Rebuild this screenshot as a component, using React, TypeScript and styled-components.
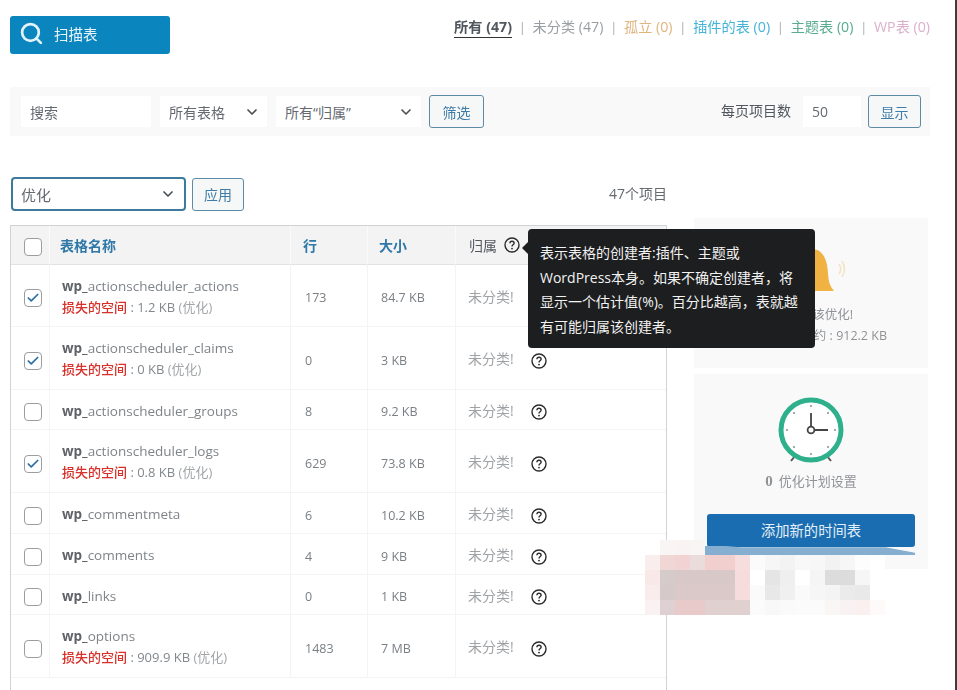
import React from "react";
import styled, { createGlobalStyle } from "styled-components";
import { Search, ChevronDown, Check } from "lucide-react";

const GlobalStyle = createGlobalStyle`
  html, body {
    margin: 0;
    padding: 0;
    background: #fff;
  }
  body {
    width: 957px;
    height: 690px;
    overflow: hidden;
    font-family: "Open Sans", "Noto Sans CJK SC", sans-serif;
    color: #50575e;
  }
`;

const Page = styled.div`
  position: relative;
  width: 957px;
  height: 690px;
  box-sizing: border-box;
  padding: 16px 25px 0 10px;
  border-right: 2px solid #3c3c3c;
  overflow: hidden;
  filter: blur(0.35px);
`;

const TopRow = styled.div`
  display: flex;
  justify-content: space-between;
  align-items: flex-start;
  height: 38px;
`;

const ScanButton = styled.button`
  display: flex;
  align-items: center;
  gap: 10px;
  width: 160px;
  height: 38px;
  padding: 0 0 3px 9px;
  border: 0;
  border-radius: 3px;
  background: #0a85bd;
  color: #e8f4fa;
  font: 14.5px "Noto Sans CJK SC", sans-serif;
`;

const Views = styled.div`
  display: flex;
  align-items: center;
  gap: 7px;
  margin-top: 2px;
  font-size: 14.2px;
  line-height: 18px;
`;

const ViewLink = styled.span<{ $color: string; $active?: boolean }>`
  color: ${(p) => p.$color};
  font-weight: ${(p) => (p.$active ? 700 : 400)};
  padding-bottom: 1px;
  border-bottom: 1px solid ${(p) => (p.$active ? "#333" : "transparent")};
`;

const Sep = styled.span`
  color: #a0a5aa;
  font-size: 12px;
`;

const FilterBar = styled.div`
  display: flex;
  align-items: center;
  height: 49px;
  margin-top: 33px;
  padding: 0 9px 0 11px;
  background: #f9f9f9;
`;

const Field = styled.div<{ $w: number; $ml?: number }>`
  display: flex;
  align-items: center;
  justify-content: space-between;
  box-sizing: border-box;
  width: ${(p) => p.$w}px;
  height: 31px;
  margin-left: ${(p) => p.$ml ?? 0}px;
  padding: 0 7px 0 9px;
  background: #fff;
  color: #646970;
  font-size: 14px;
`;

const OutlineButton = styled.button<{ $w: number; $h: number; $ml: number }>`
  width: ${(p) => p.$w}px;
  height: ${(p) => p.$h}px;
  margin-left: ${(p) => p.$ml}px;
  padding: 0;
  border: 1px solid #5d8ba5;
  border-radius: 3px;
  background: #f6f7f7;
  color: #3f7da8;
  font: 14px "Noto Sans CJK SC", sans-serif;
`;

const PerPage = styled.span`
  margin-left: auto;
  margin-right: 12px;
  color: #50575e;
  font-size: 14px;
  position: relative;
  top: -2px;
`;

const BulkRow = styled.div`
  display: flex;
  align-items: center;
  height: 34px;
  margin-top: 41px;
  margin-left: 1px;
  width: 656px;
`;

const BulkSelect = styled.div`
  display: flex;
  align-items: center;
  justify-content: space-between;
  box-sizing: border-box;
  width: 175px;
  height: 34px;
  padding: 0 8px 0 8px;
  border: 2px solid #3d7a9c;
  border-radius: 4px;
  color: #646970;
  font-size: 15px;
`;

const Count = styled.span`
  margin-left: auto;
  margin-top: -3px;
  color: #646970;
  font-size: 14px;
`;

const Content = styled.div`
  display: flex;
  align-items: flex-start;
`;

const Table = styled.div`
  width: 657px;
  height: 465px;
  margin-top: 14px;
  box-sizing: border-box;
  border: 1px solid #d0d2d4;
  border-bottom: 0;
  display: grid;
  grid-template-columns: 39px 241px 77px 88px 1fr;
  grid-template-rows: 39px 62px 63px 40px 63px 41px 41px 40px 63px 40px;
`;

const HeadCell = styled.div<{ $dark?: boolean; $pad?: number }>`
  display: flex;
  align-items: center;
  gap: 7px;
  padding-left: ${(p) => p.$pad ?? 12}px;
  background: #f3f3f3;
  border-bottom: 1px solid #e1e2e3;
  border-right: 1px solid #fafafa;
  color: ${(p) => (p.$dark ? "#50575e" : "#2f78a8")};
  font-weight: ${(p) => (p.$dark ? 400 : 700)};
  font-size: 14px;
`;

const Cell = styled.div<{ $light?: boolean; $pad?: number }>`
  display: flex;
  align-items: center;
  gap: 17px;
  box-sizing: border-box;
  padding-left: ${(p) => p.$pad ?? 12}px;
  padding-top: ${(p) => (p.$light ? 5 : 4)}px;
  border-bottom: 1px solid #f4f4f4;
  border-right: 1px solid #f4f4f4;
  color: ${(p) => (p.$light ? "#a0a3a6" : "#7a7f84")};
  font-size: ${(p) => (p.$light ? 14 : 12.5)}px;
  &:nth-child(5n) {
    border-right: 0;
  }
`;

const Uncategorized = styled.span`
  margin-top: -5px;
`;

const CheckCell = styled(Cell)`
  padding-left: 13px;
  padding-top: 5px;
`;

const HeadCheckCell = styled(HeadCell)`
  padding-left: 13px;
  padding-top: 3px;
`;

const NameCell = styled.div`
  display: flex;
  flex-direction: column;
  justify-content: center;
  gap: 4px;
  padding-left: 12px;
  padding-top: 3px;
  border-bottom: 1px solid #f4f4f4;
  border-right: 1px solid #f4f4f4;
`;

const TableName = styled.div`
  color: #7f8489;
  font-size: 13.5px;
  line-height: 17px;
  b {
    color: #5f6367;
    font-weight: 700;
  }
`;

const Lost = styled.div`
  margin-bottom: 2px;
  color: #83888d;
  font-size: 13px;
  line-height: 16px;
  b {
    color: #d8302a;
    font-weight: 500;
    font-family: "Noto Sans CJK SC", sans-serif;
  }
  span {
    color: #a3a6a9;
  }
`;

const Box = styled.span`
  display: flex;
  align-items: center;
  justify-content: center;
  box-sizing: border-box;
  width: 18px;
  height: 18px;
  border: 1px solid #9a9da2;
  border-radius: 4px;
  background: #fff;
  color: #2f6fa3;
`;

const Side = styled.div`
  display: flex;
  flex-direction: column;
  gap: 6px;
  margin-left: 27px;
  margin-top: 7px;
  width: 234px;
`;

const Panel = styled.div<{ $h: number }>`
  display: flex;
  flex-direction: column;
  align-items: center;
  height: ${(p) => p.$h}px;
  background: #f9f9fa;
  color: #909396;
  font-size: 12.5px;
`;

const BellWrap = styled.div`
  height: 67px;
  margin-top: 16px;
  margin-bottom: 3px;
  align-self: flex-end;
  margin-right: 80px;
`;

const PanelLine = styled.div<{ $right: number }>`
  align-self: flex-end;
  margin-right: ${(p) => p.$right}px;
  line-height: 21px;
  white-space: nowrap;
`;

const ClockWrap = styled.div`
  height: 70px;
  margin-top: 21px;
`;

const ScheduleText = styled.div`
  margin-top: 6px;
  font-size: 13px;
  b {
    font-family: "Liberation Serif", serif;
    font-size: 15px;
    font-weight: 700;
    margin-right: 6px;
  }
`;

const AddButton = styled.button`
  width: 208px;
  height: 33px;
  margin-top: 24px;
  padding: 0 0 2px;
  border: 0;
  border-radius: 3px;
  background: #1a6db0;
  color: #e4eff7;
  font: 14.3px "Noto Sans CJK SC", sans-serif;
  position: relative;
`;

const AddShade = styled.div`
  width: 210px;
  height: 9px;
  margin-left: -2px;
  margin-top: -1px;
  background: #85aed0;
  clip-path: polygon(0 0, 10% 0, 17% 14%, 86% 14%, 100% 75%, 100% 100%, 0 100%);
`;

const Tooltip = styled.div`
  position: absolute;
  left: 528px;
  top: 229px;
  box-sizing: border-box;
  width: 287px;
  height: 119px;
  padding: 12px 12px;
  border-radius: 4px;
  background: #1d1e1f;
  color: #f2f2f2;
  font-size: 14px;
  line-height: 24.5px;
  white-space: nowrap;
  &::before {
    content: "";
    position: absolute;
    left: -6px;
    top: 13px;
    border-style: solid;
    border-width: 6px 6px 6px 0;
    border-color: transparent #1d1e1f transparent transparent;
  }
`;

const Mosaic = styled.div`
  position: absolute;
  left: 645px;
  top: 540px;
  display: grid;
  grid-template-columns: repeat(16, 15px);
  grid-auto-rows: 15px;
`;

const Tile = styled.i.attrs<{ $c: string }>((p) => ({ style: { background: p.$c } }))<{ $c: string }>`
  display: block;
`;

const none = "transparent";

const mosaic = [
  [none, "#faf5f5", "#faf3f3", "#faf5f5", none, none, none, none, none, none, none, none, none, none, none, none],
  ["#f9eeee", "#f1d6d6", "#f1d3d3", "#ebdcdc", "#f1cfcf", "#f1cfcf", "#f7dede", "#fbfbfb", "#f6f6f6", "#f3f3f3", "#f8f8f8", "#f7f7f7", "#f2f2f2", "#f6f6f6", "#fdfdfd", "#ffffff"],
  ["#f8e8e8", "#d6cbcb", "#d9c8c8", "#d9c8c8", "#d9c8c8", "#d9c8c8", "#f6dcdc", "#ffffff", "#e5e5e5", "#efefef", "#ffffff", "#f5f5f5", "#dcdcdc", "#dcdcdc", "#f6f6f6", "#ffffff"],
  ["#f8ecec", "#d6c9c9", "#dbc9c9", "#dbc9c9", "#dbc9c9", "#dbc9c9", "#f6dcdc", "#fafafa", "#e8e8e8", "#f0f0f0", "#fafafa", "#f6f6f6", "#f4f4f4", "#ebebeb", "#e9e9e9", "#ffffff"],
  ["#faf2f2", "#dfd1d1", "#e9caca", "#e9caca", "#e0d0d0", "#e0d0d0", "#e0d0d0", "#fbfbfb", "#f8f8f8", "#fafafa", "#fbfbfb", "#fbfbfb", "#fbf6f6", "#f9f2f2", "#faf0f0", "#fffafa"],
];

const HelpIcon = () => (
  <svg width="16" height="16" viewBox="0 0 16 16" fill="none">
    <circle cx="8" cy="8" r="7" stroke="#2b2b2b" strokeWidth="1.4" />
    <path d="M5.9 6.2C6 4.9 7 4.3 8 4.3c1.2 0 2.1.8 2.1 1.9 0 1.6-2.1 1.6-2.1 3.2" stroke="#2b2b2b" strokeWidth="1.4" />
    <circle cx="8" cy="11.6" r=".9" fill="#2b2b2b" />
  </svg>
);

const Bell = () => (
  <svg width="64" height="64" viewBox="0 0 64 64" fill="none">
    <path d="M28 15c-8 0-13 6-15 16-2 11 0 18-7 26h44c-7-8-5-15-7-26-2-10-7-16-15-16z" fill="#f0b243" />
    <path d="M55 30c2 3 2 7 0 10M58 27c3 5 3 11 0 16" stroke="#f3e3c5" strokeWidth="1.5" />
  </svg>
);

const Clock = () => (
  <svg width="70" height="70" viewBox="0 0 70 70" fill="none">
    <path d="M19 61l-4 5M51 61l4 5" stroke="#555" strokeWidth="2" />
    <circle cx="35" cy="35" r="30" fill="#fff" stroke="#2fb08c" strokeWidth="5" />
    <g fill="#8c9a96">
      <circle cx="35" cy="11" r="1.1" />
      <circle cx="35" cy="59" r="1.1" />
      <circle cx="11" cy="35" r="1.1" />
      <circle cx="59" cy="35" r="1.1" />
      <circle cx="18" cy="18" r="1.1" />
      <circle cx="52" cy="18" r="1.1" />
      <circle cx="18" cy="52" r="1.1" />
      <circle cx="52" cy="52" r="1.1" />
    </g>
    <path d="M35 18v13M39 35h13" stroke="#444" strokeWidth="1.8" />
    <circle cx="35" cy="35" r="3.4" stroke="#444" strokeWidth="1.8" />
  </svg>
);

type Row = { name: string; lost?: string; rows: string; size: string; checked?: boolean };

const rows: Row[] = [
  { name: "actionscheduler_actions", lost: "1.2 KB", rows: "173", size: "84.7 KB", checked: true },
  { name: "actionscheduler_claims", lost: "0 KB", rows: "0", size: "3 KB", checked: true },
  { name: "actionscheduler_groups", rows: "8", size: "9.2 KB" },
  { name: "actionscheduler_logs", lost: "0.8 KB", rows: "629", size: "73.8 KB", checked: true },
  { name: "commentmeta", rows: "6", size: "10.2 KB" },
  { name: "comments", rows: "4", size: "9 KB" },
  { name: "links", rows: "0", size: "1 KB" },
  { name: "options", lost: "909.9 KB", rows: "1483", size: "7 MB" },
];

const views = [
  { label: "所有 (47)", color: "#50575e", active: true },
  { label: "未分类 (47)", color: "#9a9ea2" },
  { label: "孤立 (0)", color: "#e0b57e" },
  { label: "插件的表 (0)", color: "#45b4d8" },
  { label: "主题表 (0)", color: "#58ab8e" },
  { label: "WP表 (0)", color: "#dcb0cc" },
];

export default function App() {
  return (
    <Page>
      <GlobalStyle />
      <TopRow>
        <ScanButton>
          <Search size={25} strokeWidth={2.6} color="#e4f3fa" />
          扫描表
        </ScanButton>
        <Views>
          {views.map((v, i) => (
            <React.Fragment key={v.label}>
              {i > 0 && <Sep>|</Sep>}
              <ViewLink $color={v.color} $active={v.active}>
                {v.label}
              </ViewLink>
            </React.Fragment>
          ))}
        </Views>
      </TopRow>

      <FilterBar>
        <Field $w={130}>搜索</Field>
        <Field $w={107} $ml={9}>
          所有表格
          <ChevronDown size={16} strokeWidth={2.5} color="#4a4f54" />
        </Field>
        <Field $w={145} $ml={9}>
          所有“归属”
          <ChevronDown size={16} strokeWidth={2.5} color="#4a4f54" />
        </Field>
        <OutlineButton $w={55} $h={33} $ml={8}>
          筛选
        </OutlineButton>
        <PerPage>每页项目数</PerPage>
        <Field $w={58}>50</Field>
        <OutlineButton $w={53} $h={33} $ml={7}>
          显示
        </OutlineButton>
      </FilterBar>

      <BulkRow>
        <BulkSelect>
          优化
          <ChevronDown size={16} strokeWidth={2.5} color="#4a4f54" />
        </BulkSelect>
        <OutlineButton $w={52} $h={33} $ml={6}>
          应用
        </OutlineButton>
        <Count>47个项目</Count>
      </BulkRow>

      <Content>
        <Table>
          <HeadCheckCell>
            <Box />
          </HeadCheckCell>
          <HeadCell $pad={10}>表格名称</HeadCell>
          <HeadCell>行</HeadCell>
          <HeadCell $pad={11}>大小</HeadCell>
          <HeadCell $dark $pad={13}>
            归属 <HelpIcon />
          </HeadCell>
          {rows.map((r) => (
            <React.Fragment key={r.name}>
              <CheckCell>
                <Box>{r.checked && <Check size={14} strokeWidth={3} />}</Box>
              </CheckCell>
              <NameCell>
                <TableName>
                  <b>wp_</b>
                  {r.name}
                </TableName>
                {r.lost && (
                  <Lost>
                    <b>损失的空间</b> : {r.lost} <span>(优化)</span>
                  </Lost>
                )}
              </NameCell>
              <Cell $pad={14}>{r.rows}</Cell>
              <Cell $pad={13}>{r.size}</Cell>
              <Cell $light>
                <Uncategorized>未分类!</Uncategorized>
                <HelpIcon />
              </Cell>
            </React.Fragment>
          ))}
        </Table>

        <Side>
          <Panel $h={150}>
            <BellWrap>
              <Bell />
            </BellWrap>
            <PanelLine $right={75}>该优化!</PanelLine>
            <PanelLine $right={41}>约 : 912.2 KB</PanelLine>
          </Panel>
          <Panel $h={195}>
            <ClockWrap>
              <Clock />
            </ClockWrap>
            <ScheduleText>
              <b>0</b>优化计划设置
            </ScheduleText>
            <AddButton>添加新的时间表</AddButton>
            <AddShade />
          </Panel>
        </Side>
      </Content>

      <Tooltip>
        表示表格的创建者:插件、主题或
        <br />
        WordPress本身。如果不确定创建者，将
        <br />
        显示一个估计值(%)。百分比越高，表就越
        <br />
        有可能归属该创建者。
      </Tooltip>

      <Mosaic>
        {mosaic.flat().map((c, i) => (
          <Tile key={i} $c={c} />
        ))}
      </Mosaic>
    </Page>
  );
}
